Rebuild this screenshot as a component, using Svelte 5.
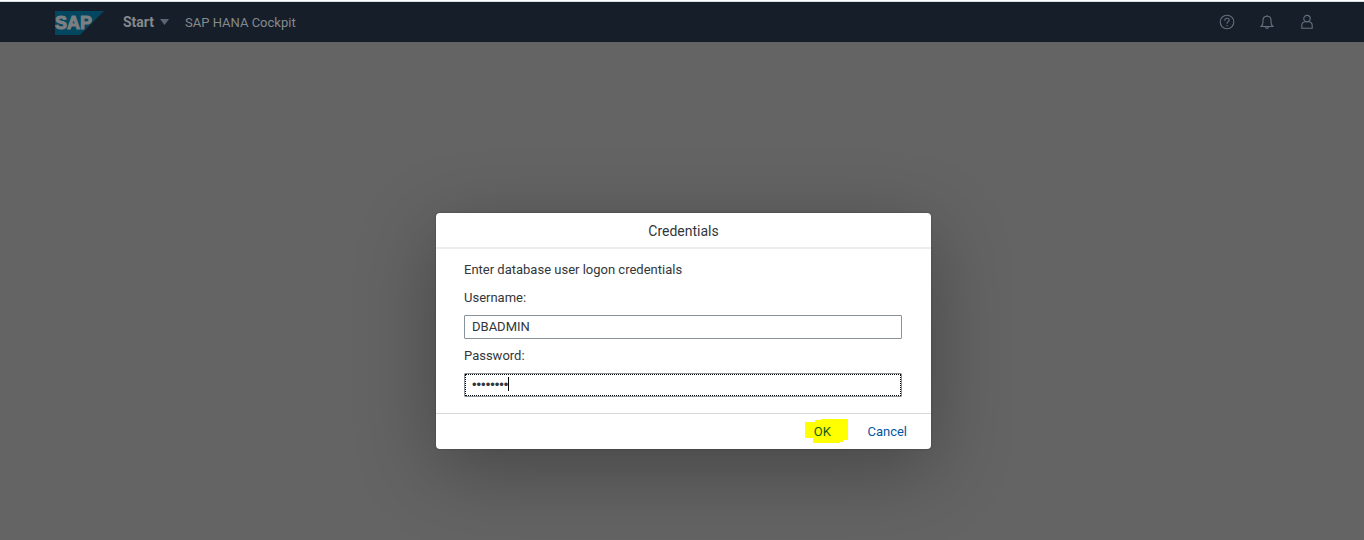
<script>
  let username = $state('DBADMIN');
  let password = $state('password');
</script>

<div class="page">
  <header class="shell">
    <svg class="logo" viewBox="0 0 49 26" role="img" aria-label="SAP">
      <path d="M0 2H49L25 26H0Z" fill="#02475f" />
      <text x="0" y="20" class="mark">SAP</text>
    </svg>
    <button class="start" type="button">
      Start
      <svg width="9" height="6" viewBox="0 0 9 6" aria-hidden="true"><path d="M0 0H9L4.5 6Z" fill="#5a6672" /></svg>
    </button>
    <span class="app-title">SAP HANA Cockpit</span>
    <nav class="tools" aria-label="Shell">
      <button type="button" aria-label="Help">
        <svg viewBox="0 0 16 16">
          <circle cx="8" cy="8" r="6.8" />
          <path d="M5.8 6.7V6.2C5.8 4.9 6.7 4.2 8 4.2S10.2 5 10.2 6.1C10.2 7.7 8 7.6 8 9.4V9.8M8 11V12.3" />
        </svg>
      </button>
      <button type="button" aria-label="Notifications">
        <svg viewBox="0 0 16 16">
          <path d="M8 1V2.2M2.2 12.5C3.6 11.3 4 10 4 8V6C4 3.6 5.6 2.3 8 2.3S12 3.6 12 6V8C12 10 12.4 11.3 13.8 12.5ZM6.6 13C6.8 14.8 9.2 14.8 9.4 13" />
        </svg>
      </button>
      <button type="button" aria-label="User">
        <svg viewBox="0 0 16 16">
          <circle cx="8" cy="4.6" r="3.2" />
          <path d="M2.8 14.3V11.5C2.8 9.2 4.4 7.9 6.3 7.7H9.7C11.6 7.9 13.2 9.2 13.2 11.5V14.3Z" />
        </svg>
      </button>
    </nav>
  </header>

  <main>
    <form class="dialog" role="dialog" aria-labelledby="title" onsubmit={(e) => e.preventDefault()}>
      <h1 id="title">Credentials</h1>
      <div class="body">
        <p>Enter database user logon credentials</p>
        <label for="user">Username:</label>
        <input id="user" type="text" bind:value={username} />
        <label for="pass">Password:</label>
        <div class="field">
          <input id="pass" type="password" bind:value={password} />
          <span class="caret" aria-hidden="true"></span>
        </div>
      </div>
      <footer>
        <button class="ok" type="submit">
          <svg class="marker" viewBox="0 0 43 25" aria-hidden="true"><path d="M0 3H10V1H16V0H43V21H38V23H35V24H8V19H0Z" fill="#ff0" /></svg>
          <span>OK</span>
        </button>
        <button type="button">Cancel</button>
      </footer>
    </form>
  </main>
</div>

<style>
  :global(body) {
    margin: 0;
    background: #646464;
  }
  .page {
    min-height: 100vh;
    box-sizing: border-box;
    border-top: 1px solid #fff;
    font-family: Roboto, "Noto Sans", sans-serif;
    font-size: 13px;
    color: #32363a;
    background: #646464;
    overflow: hidden;
  }
  .shell {
    display: flex;
    align-items: center;
    height: 40px;
    padding: 0 49px 0 55px;
    border-top: 1px solid #d5dde5;
    background: #161f29;
    color: #85898d;
  }
  .logo {
    width: 49px;
    height: 26px;
  }
  .mark {
    font: bold 18px "Liberation Sans", Arial, sans-serif;
    fill: #7c7f82;
    stroke: #7c7f82;
    stroke-width: 1px;
  }
  button {
    border: 0;
    padding: 0;
    background: none;
    font: inherit;
    color: inherit;
  }
  .start {
    display: flex;
    align-items: center;
    gap: 6px;
    margin-left: 19px;
    font-size: 14px;
    font-weight: bold;
  }
  .app-title {
    margin-left: 16px;
  }
  .tools {
    display: flex;
    gap: 24px;
    margin-left: auto;
  }
  .tools button {
    display: flex;
  }
  .tools svg {
    width: 16px;
    height: 16px;
    fill: none;
    stroke: #64717c;
    stroke-width: 1.1;
  }
  main {
    padding: 171px 0 91px 3px;
  }
  .dialog {
    width: 495px;
    max-width: 100%;
    margin: 0 auto;
    border-radius: 4px;
    background: #fff;
    box-shadow: 0 0 2px rgba(0, 0, 0, 0.3), 0 20px 80px rgba(0, 0, 0, 0.3);
  }
  h1 {
    margin: 0;
    border-bottom: 2px solid #ededed;
    font-size: 14px;
    font-weight: normal;
    line-height: 34px;
    padding-top: 1px;
    height: 33px;
    text-align: center;
  }
  .body {
    padding: 11px 29px 16px 28px;
  }
  p {
    margin: 0 0 8px;
    line-height: 20px;
  }
  label {
    display: block;
    margin-bottom: 7px;
    line-height: 20px;
  }
  input {
    display: block;
    box-sizing: border-box;
    width: 100%;
    height: 24px;
    padding: 0 7px 2px;
    border: 1px solid #89919a;
    border-radius: 1px;
    background: #fff;
    font: inherit;
    color: #32363a;
    outline: 0;
  }
  #user {
    margin-bottom: 7px;
  }
  #pass {
    font-family: "Liberation Sans", Arial, sans-serif;
  }
  .field {
    position: relative;
  }
  .field::after {
    content: "";
    position: absolute;
    inset: 1px;
    border: 1px dotted #000;
    pointer-events: none;
  }
  .caret {
    position: absolute;
    left: 44px;
    top: 4px;
    width: 1px;
    height: 14px;
    background: #000;
  }
  footer {
    display: flex;
    justify-content: flex-end;
    align-items: center;
    gap: 19px;
    height: 35px;
    padding-right: 24px;
    border-top: 1px solid #d9d9d9;
    color: #0854a0;
  }
  .ok {
    position: relative;
    width: 43px;
    height: 25px;
    padding-right: 9px;
    color: #155b10;
  }
  .ok span {
    position: relative;
  }
  .marker {
    position: absolute;
    left: 0;
    top: 0;
    width: 43px;
    height: 25px;
  }
</style>
